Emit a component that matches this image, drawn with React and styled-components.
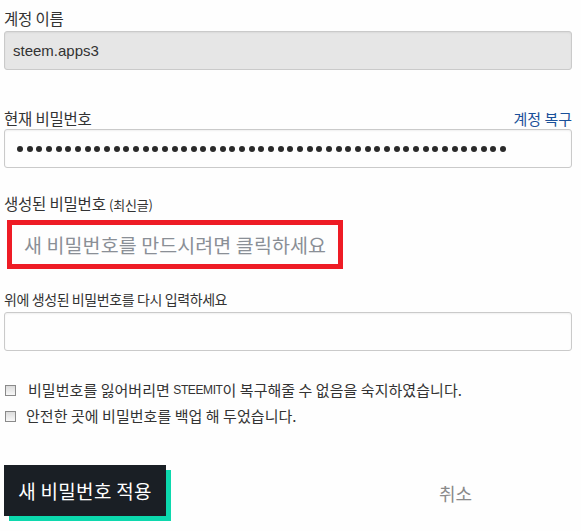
import React from "react";
import styled, { createGlobalStyle } from "styled-components";

const Global = createGlobalStyle`
  html, body { margin: 0; padding: 0; background: #fefefe; }
  body { font-family: "Noto Sans CJK KR", "Noto Sans", sans-serif; color: #333; min-height: 531px; }
  * { box-sizing: border-box; }
`;

const Form = styled.form`
  width: 581px;
  padding: 8px 9px 20px 4px;
  display: flex;
  flex-direction: column;
`;

const Field = styled.div`
  display: flex;
  flex-direction: column;
  margin-bottom: ${(p) => p.$mb || 0}px;
`;

const LabelRow = styled.div`
  display: flex;
  justify-content: space-between;
  align-items: baseline;
  height: 21px;
  margin-bottom: ${(p) => p.$mb ?? 2}px;
`;

const Label = styled.label`
  font-size: ${(p) => p.$size || 15.5}px;
  line-height: 20px;
  color: #333;
  letter-spacing: ${(p) => (p.$tight ? -0.4 : -0.2)}px;
`;

const Small = styled.span`
  font-size: 13px;
`;

const Link = styled.a`
  font-size: 15px;
  line-height: 20px;
  color: #1a5099;
  text-decoration: none;
`;

const Input = styled.div`
  height: 39px;
  border: 1px solid #cacaca;
  border-radius: 3px;
  background: ${(p) => (p.$disabled ? "#e6e6e6" : "#fefefe")};
  box-shadow: inset 0 1px 2px rgba(10, 10, 10, 0.06);
  padding: 0 8px;
  display: flex;
  align-items: center;
  font-family: "Liberation Sans", "Noto Sans", sans-serif;
  font-size: 15px;
  color: #333;
`;

const Dots = styled.span`
  display: flex;
  gap: 3.67px;
  padding-left: 4px;
`;

const Dot = styled.i`
  width: 6px;
  height: 6px;
  border-radius: 50%;
  background: #2a2a2a;
`;

const Generated = styled.div`
  margin-left: 3px;
  width: 336px;
  height: 49px;
  border: 5px solid #ee1c25;
  display: flex;
  align-items: center;
  padding-left: 12px;
  font-size: 19.5px;
  color: #8a8f96;
  letter-spacing: 0.1px;
`;

const Check = styled.label`
  display: flex;
  align-items: center;
  font-size: 15px;
  line-height: 20px;
  height: 26px;
  color: #333;
  letter-spacing: 0.05px;
`;

const Box = styled.span`
  width: 11px;
  height: 11px;
  margin-left: 1px;
  margin-right: ${(p) => p.$gap}px;
  border: 1px solid #8a8a8a;
  background: linear-gradient(#dcdcdc, #f8f8f8);
  flex-shrink: 0;
`;

const Brand = styled.span`
  font-family: "Liberation Sans", sans-serif;
  font-size: 12px;
  letter-spacing: -0.4px;
`;

const Actions = styled.div`
  margin-top: 36px;
  display: flex;
  align-items: center;
`;

const Primary = styled.button`
  width: 162px;
  height: 51px;
  background: #1a1f25;
  color: #fff;
  border: none;
  box-shadow: 5px 5px 0 #0cd8ad;
  font-family: "Noto Sans CJK KR", sans-serif;
  font-size: 19px;
  letter-spacing: 0.3px;
  padding: 0;
`;

const Cancel = styled.button`
  margin-left: 273px;
  background: none;
  border: none;
  color: #8a8a8a;
  font-family: "Noto Sans CJK KR", sans-serif;
  font-size: 18px;
  padding: 0;
  margin-top: 4px;
`;

export default function App() {
  return (
    <>
      <Global />
      <Form>
        <Field $mb={38}>
          <LabelRow $mb={2}>
            <Label>계정 이름</Label>
          </LabelRow>
          <Input $disabled>steem.apps3</Input>
        </Field>
        <Field $mb={25}>
          <LabelRow $mb={0}>
            <Label>현재 비밀번호</Label>
            <Link href="#">계정 복구</Link>
          </LabelRow>
          <Input>
            <Dots>
              {Array.from({ length: 51 }).map((_, i) => (
                <Dot key={i} />
              ))}
            </Dots>
          </Input>
        </Field>
        <Field $mb={20}>
          <LabelRow $mb={6}>
            <Label>
              생성된 비밀번호 <Small>(최신글)</Small>
            </Label>
          </LabelRow>
          <Generated>새 비밀번호를 만드시려면 클릭하세요</Generated>
        </Field>
        <Field $mb={26}>
          <LabelRow $mb={2}>
            <Label $size={14} $tight>
              위에 생성된 비밀번호를 다시 입력하세요
            </Label>
          </LabelRow>
          <Input />
        </Field>
        <Check>
          <Box $gap={12} />
          비밀번호를 잃어버리면&nbsp;<Brand>STEEMIT</Brand>이 복구해줄 수 없음을 숙지하였습니다.
        </Check>
        <Check>
          <Box $gap={10} />
          안전한 곳에 비밀번호를 백업 해 두었습니다.
        </Check>
        <Actions>
          <Primary type="button">새 비밀번호 적용</Primary>
          <Cancel type="button">취소</Cancel>
        </Actions>
      </Form>
    </>
  );
}
